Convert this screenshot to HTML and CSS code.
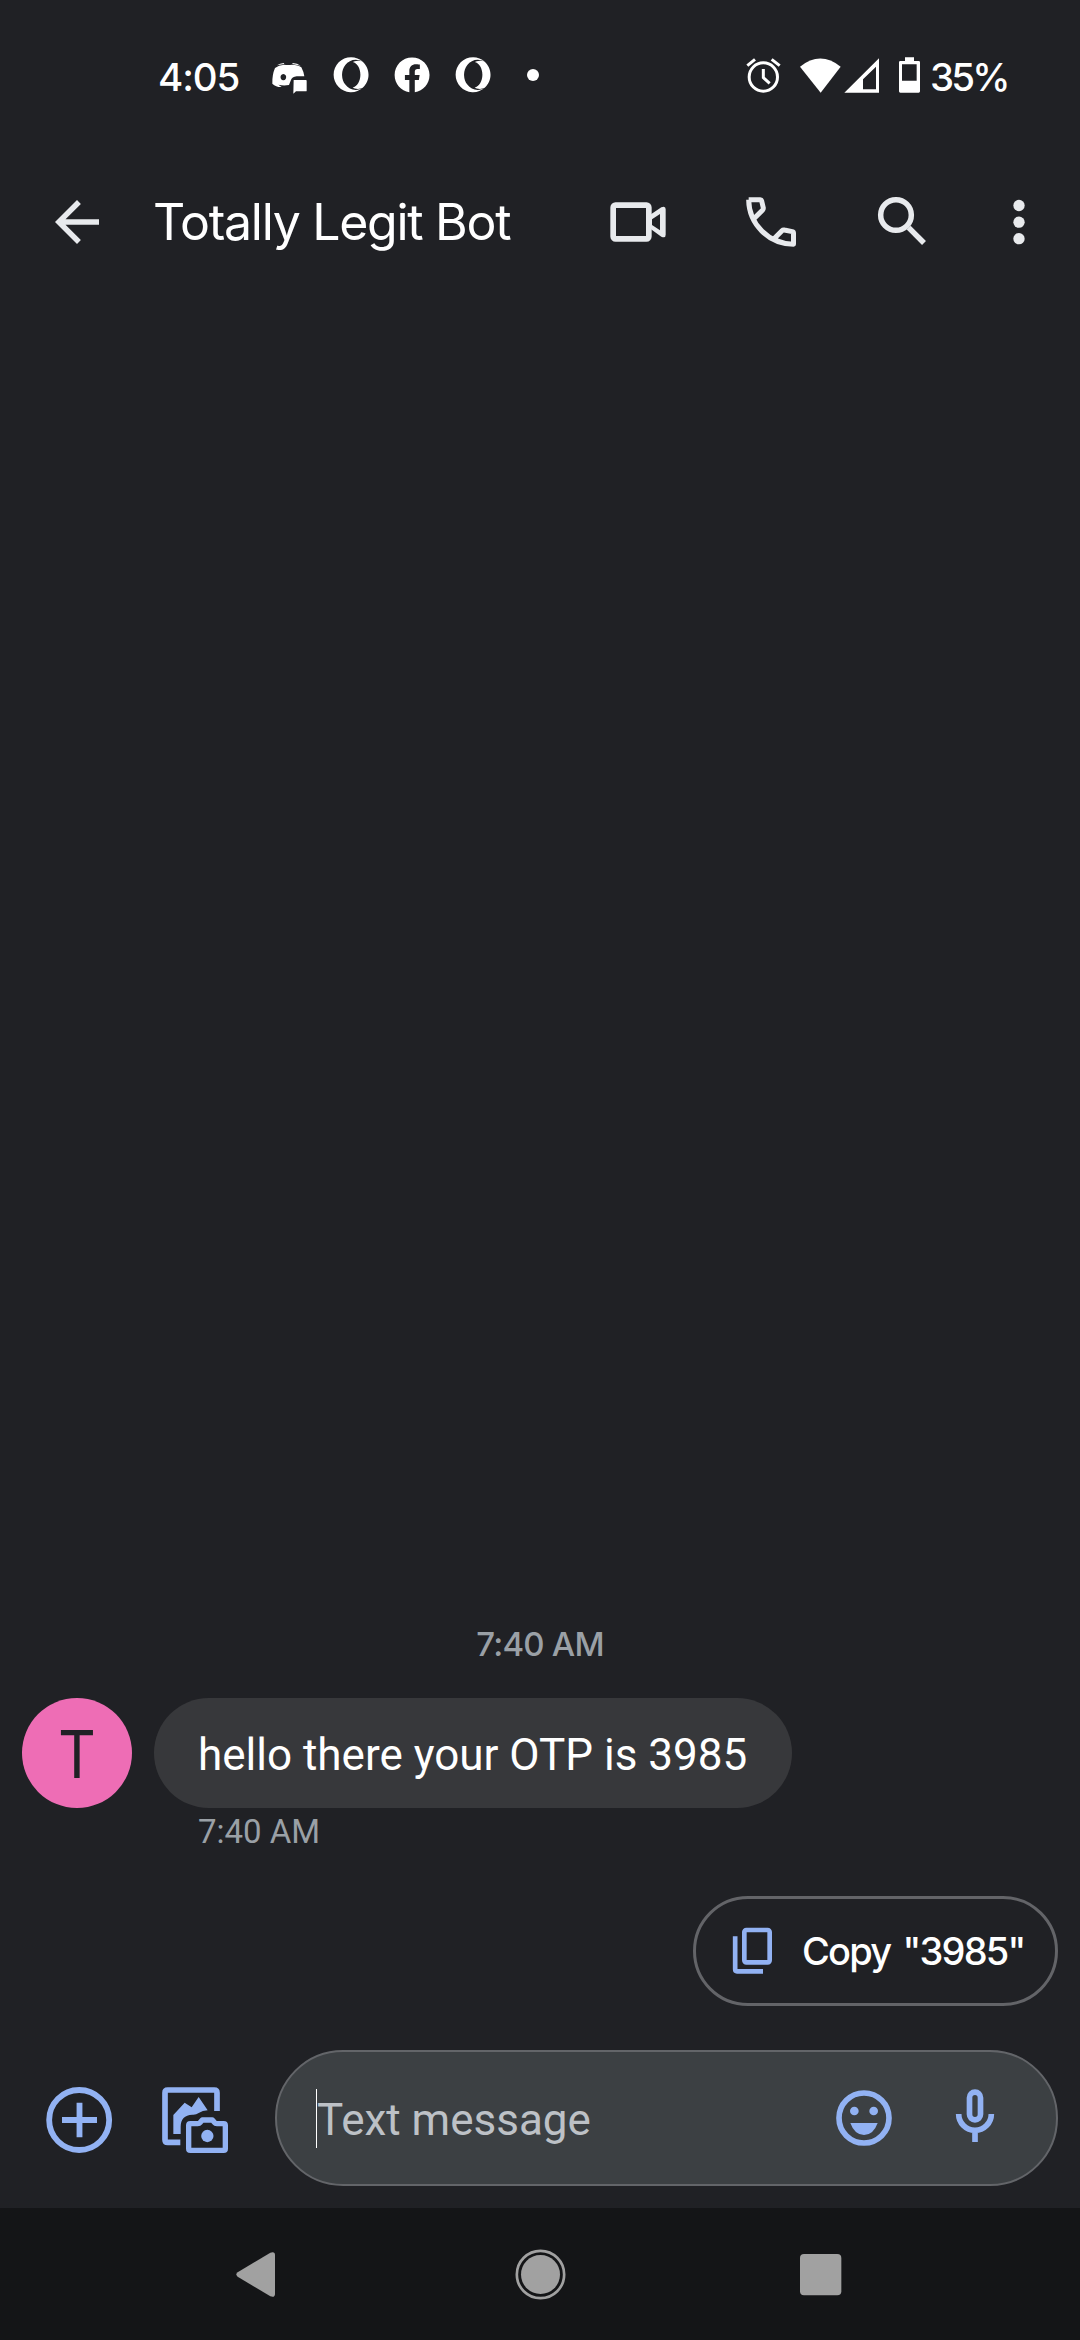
FILE: index.html
```
<!DOCTYPE html>
<html lang="en">
<head>
<meta charset="utf-8">
<title>Totally Legit Bot</title>
<link rel="stylesheet" href="styles.css">
</head>
<body>
<div class="status-bar">
  <span class="clock">4:05</span>
  <div class="notifications">
    <svg width="40" height="40" viewBox="390 45 120 120" fill="currentColor"><path fill-rule="evenodd" d="M405 84Q416 75 432 74Q444 76 456 74Q474 74 484 82Q491 95 493 109H470Q456 110 452 122L447 135Q430 138 415 134L425 141Q409 142 397 131Q396 105 405 84ZM430 102a8.500 9.500 0 1 0 .1 0Z"/><path d="M411 76Q420 70 431 69L433 72ZM458 69Q472 70 482 77L457 72Z"/><path d="M461 120H498Q500 120 500 123V152Q500 154 498 154H468L460 161Z"/></svg>
    <svg width="40" height="40" viewBox="-1.800 -1.600 27.500 27.500" fill="currentColor"><path d="M8.051 5.238c-1.328 1.566-2.186 3.883-2.246 6.480v.564c.061 2.598.918 4.912 2.246 6.479 1.721 2.236 4.279 3.654 7.139 3.654 1.756 0 3.400-.537 4.807-1.471C17.879 22.846 15.074 24 12 24c-.192 0-.383-.004-.570-.014C5.064 23.689 0 18.436 0 12 0 5.371 5.373 0 12 0h.045c3.055.012 5.840 1.166 7.953 3.055-1.408-.930-3.051-1.471-4.810-1.471-2.858 0-5.417 1.420-7.140 3.654h.003zM24 12c0 3.556-1.545 6.748-4.002 8.945-3.078 1.500-5.946.451-6.896-.205 3.023-.664 5.307-4.320 5.307-8.740 0-4.422-2.283-8.075-5.307-8.740.949-.654 3.818-1.703 6.896-.205C22.455 5.250 24 8.445 24 12z"/></svg>
    <svg width="40" height="40" viewBox="-1.800 -1.600 27.500 27.500" fill="currentColor"><path d="M24 12.073c0-6.627-5.373-12-12-12s-12 5.373-12 12c0 5.990 4.388 10.954 10.125 11.854v-8.385H7.078v-3.470h3.047V9.430c0-3.007 1.792-4.669 4.533-4.669 1.312 0 2.686.235 2.686.235v2.953H15.830c-1.491 0-1.956.925-1.956 1.874v2.250h3.328l-.532 3.470h-2.796v8.385C19.612 23.027 24 18.062 24 12.073z"/></svg>
    <svg width="40" height="40" viewBox="-1.800 -1.600 27.500 27.500" fill="currentColor"><path d="M8.051 5.238c-1.328 1.566-2.186 3.883-2.246 6.480v.564c.061 2.598.918 4.912 2.246 6.479 1.721 2.236 4.279 3.654 7.139 3.654 1.756 0 3.400-.537 4.807-1.471C17.879 22.846 15.074 24 12 24c-.192 0-.383-.004-.570-.014C5.064 23.689 0 18.436 0 12 0 5.371 5.373 0 12 0h.045c3.055.012 5.840 1.166 7.953 3.055-1.408-.930-3.051-1.471-4.810-1.471-2.858 0-5.417 1.420-7.140 3.654h.003zM24 12c0 3.556-1.545 6.748-4.002 8.945-3.078 1.500-5.946.451-6.896-.205 3.023-.664 5.307-4.320 5.307-8.740 0-4.422-2.283-8.075-5.307-8.740.949-.654 3.818-1.703 6.896-.205C22.455 5.250 24 8.445 24 12z"/></svg>
    <span class="more-dot"></span>
  </div>
  <div class="system">
    <svg width="40" height="40" viewBox="72 45 120 120" fill="none" stroke="currentColor" stroke-width="9"><circle cx="130" cy="111" r="42.500"/><path d="M130 87V113L149 130M82 77L105 58M155 58L179 77"/></svg>
    <svg class="signal" width="84" height="40" viewBox="234 45 252 120" fill="currentColor"><path d="M240 80Q301 31 362 80L302 158Z"/><path fill-rule="evenodd" d="M373 158L477 55V158ZM429 118V148H468V80Z"/></svg>
    <svg class="battery" width="28" height="40" viewBox="528 45 84 120" fill="currentColor"><path fill-rule="evenodd" d="M555 52H582V63H596Q600 63 600 67V154Q600 158 596 158H541Q537 158 537 154V67Q537 63 541 63H555ZM546 73V122H590V73Z"/></svg>
    <span class="percent">35%</span>
  </div>
</div>

<header class="app-bar">
  <svg class="back" width="66" height="66" viewBox="0 0 24 24" fill="currentColor"><path d="M20 11H7.830l5.590-5.590L12 4l-8 8 8 8 1.410-1.410L7.830 13H20v-2z"/></svg>
  <h1 class="title">Totally Legit Bot</h1>
  <div class="actions">
    <svg width="62" height="54" viewBox="57 45 186 162" fill="none" stroke="currentColor" stroke-width="17" stroke-linejoin="round"><rect x="72.500" y="75.500" width="107" height="101" rx="7"/><path stroke="none" fill="currentColor" fill-rule="evenodd" d="M186 103L217 82Q230 76 230 88V164Q230 176 217 170L186 148ZM189 118V135L213 151V102Z"/></svg>
    <svg width="54" height="54" viewBox="462 45 162 162" fill="none" stroke="currentColor" stroke-width="15" stroke-linejoin="round"><path d="M476 59.500H511Q514 59.500 515 63L520 84Q520 88 518 90L493 115M476 59.500C477 133 536 192 610.500 192.500V159Q610.500 156 607 155L583 150Q579 149 576 152L552 176"/></svg>
    <svg width="54" height="54" viewBox="858 45 162 162" fill="none" stroke="currentColor" stroke-width="16.500"><circle cx="918" cy="105" r="46"/><path d="M956 143L1002 189"/></svg>
    <svg width="20" height="54" viewBox="1257 45 60 162" fill="currentColor"><circle cx="1287" cy="76.500" r="17"/><circle cx="1287" cy="126.500" r="17"/><circle cx="1287" cy="176" r="17"/></svg>
  </div>
</header>

<main class="conversation">
  <div class="day-time">7:40 AM</div>
  <div class="message">
    <div class="avatar"><span>T</span></div>
    <div class="bubble"><span>hello there your OTP is 3985</span></div>
  </div>
  <div class="sent-time">7:40 AM</div>
  <div class="suggestions">
    <div class="chip">
      <svg width="46" height="54" viewBox="150 132 138 162" fill="none" stroke="currentColor" stroke-width="14"><rect x="193" y="150" width="76" height="97" rx="6"/><path d="M165.500 169V268Q165.500 274 171 274H249"/></svg>
      <span>Copy "3985"</span>
    </div>
  </div>
</main>

<div class="composer">
  <svg width="70" height="70" viewBox="72 135 210 210" fill="none" stroke="currentColor" stroke-width="17.500"><circle cx="177.500" cy="240" r="90"/><path d="M126 240H231M178.500 188V292"/></svg>
  <svg class="gallery" width="72" height="72" viewBox="417 132 216 216" fill="none" stroke="currentColor" stroke-width="17"><path d="M591 213V158Q591 150 583 150H443Q435 150 435 158V299Q435 307 443 307H481"/><path stroke="none" fill="currentColor" d="M460 282V225L494 188L515 202L536 171L563 211Q548 211 536 219Q528 225 517 224Q482 226 482 260V282Z"/><path stroke-width="16" stroke-linejoin="round" d="M511 251H533Q538 251 541 247L547 240H577L583 247Q586 251 591 251H611Q616 251 616 256V326Q616 331 611 331H511Q506 331 506 326V256Q506 251 511 251Z"/><circle cx="562" cy="288" r="18.500" fill="currentColor" stroke="none"/></svg>
  <div class="field">
    <span class="caret"></span>
    <span class="placeholder">Text message</span>
    <svg class="emoji" width="64" height="64" viewBox="126 138 192 192" fill="currentColor"><circle cx="222" cy="234" r="75" fill="none" stroke="currentColor" stroke-width="17"/><circle cx="193" cy="213" r="13"/><circle cx="251" cy="213" r="13"/><path d="M181 249H263Q250 285 222 285Q194 285 181 249Z"/></svg>
    <svg class="mic" width="50" height="64" viewBox="480 138 150 192" fill="none" stroke="currentColor" stroke-width="17"><rect x="538.500" y="156.500" width="33" height="83" rx="16.500"/><path d="M506 222A49 49 0 0 0 604 222M555 272V306"/></svg>
  </div>
</div>

<nav class="system-nav">
  <svg width="44" height="54" viewBox="102 141 132 162" fill="currentColor"><path d="M113 217L211 158Q225 153 225 165V281Q225 294 211 289L113 230Q105 223 113 217Z"/></svg>
  <svg width="54" height="54" viewBox="939 141 162 162" fill="currentColor"><circle cx="1021.500" cy="223.500" r="58.500"/><circle cx="1021.500" cy="223.500" r="71" fill="none" stroke="currentColor" stroke-width="8"/></svg>
  <svg width="46" height="54" viewBox="894 141 138 162" fill="currentColor"><rect x="900" y="162" width="124" height="124" rx="12"/></svg>
</nav>
</body>
</html>
```

FILE: styles.css
```
* { box-sizing: border-box; }

body {
  margin: 0;
  width: 1080px;
  height: 2340px;
  display: flex;
  flex-direction: column;
  overflow: hidden;
  background: #202125;
  color: #fff;
  font-family: Roboto, sans-serif;
}

svg { display: block; flex: none; }
span { white-space: nowrap; }

.status-bar {
  height: 150px;
  flex: none;
  display: flex;
  align-items: center;
  padding-left: 158px;
  font: 500 38.5px/46px Inter, sans-serif;
}
.clock { width: 112px; padding-top: 4px; letter-spacing: -1.1px; }
.notifications { display: flex; align-items: center; gap: 21px; }
.more-dot {
  width: 12px;
  height: 12px;
  margin-left: 13px;
  border-radius: 50%;
  background: #fff;
}
.system { display: flex; align-items: center; margin-left: 205px; }
.signal { margin-left: 14px; }
.battery { margin-left: 14px; }
.percent { margin-left: 6px; padding-top: 4px; letter-spacing: -2.9px; }

.app-bar {
  height: 144px;
  flex: none;
  display: flex;
  align-items: center;
  padding-left: 44px;
  color: #e8eaed;
}
.title {
  width: 455px;
  margin: 0 0 0 43px;
  color: #fff;
  font: 400 50px/60px Inter, sans-serif;
  letter-spacing: -1.3px;
  white-space: nowrap;
}
.actions { display: flex; align-items: center; }
.actions svg:nth-child(2) { margin-left: 74px; }
.actions svg:nth-child(3) { margin-left: 78px; }
.actions svg:nth-child(4) { margin-left: 79px; }

.conversation {
  flex: 1;
  display: flex;
  flex-direction: column;
  justify-content: flex-end;
}
.day-time {
  height: 40px;
  margin-bottom: 34px;
  text-align: center;
  color: #9aa0a6;
  font: 500 33px/40px Inter, sans-serif;
  letter-spacing: -.8px;
}
.message { display: flex; padding-left: 22px; gap: 22px; }
.avatar {
  width: 110px;
  height: 110px;
  display: flex;
  align-items: center;
  justify-content: center;
  padding-top: 3px;
  border-radius: 50%;
  background: #ee6db5;
  color: #202125;
  font-size: 67px;
  line-height: 80px;
}
.avatar span { transform: scaleX(.87); }
.bubble {
  width: 638px;
  height: 110px;
  padding: 2px 0 0 44px;
  border-radius: 55px;
  background: #37383b;
  font-size: 44px;
  line-height: 110px;
}
.sent-time {
  height: 40px;
  margin: 4px 0 0 198px;
  color: #9aa0a6;
  font-size: 33px;
  line-height: 40px;
}
.suggestions {
  display: flex;
  justify-content: flex-end;
  padding: 44px 22px 44px 0;
}
.chip {
  width: 365px;
  height: 110px;
  display: flex;
  align-items: center;
  padding-left: 34px;
  border: 3px solid #636468;
  border-radius: 55px;
  font: 500 38px/46px Inter, sans-serif;
  letter-spacing: -1.8px;
  word-spacing: 4px;
}
.chip svg { color: #92b2f3; }
.chip span { margin-left: 26px; }

.composer {
  flex: none;
  height: 158px;
  display: flex;
  align-items: flex-start;
  padding-left: 44px;
  color: #92b2f3;
}
.composer > svg { margin-top: 35px; }
.composer > .gallery { margin: 34px 44px 0 45px; }
.field {
  width: 783px;
  height: 136px;
  display: flex;
  align-items: center;
  padding-left: 39px;
  border: 2px solid #636569;
  border-radius: 68px;
  background: #3c4043;
}
.caret { width: 1px; height: 59px; background: #fff; }
.placeholder {
  width: 515px;
  padding-top: 4px;
  color: #bdc1c6;
  font-size: 44px;
  line-height: 52px;
}
.mic { margin-left: 54px; }

.system-nav {
  flex: none;
  height: 132px;
  display: flex;
  align-items: center;
  gap: 233px;
  padding-left: 234px;
  background: #141517;
  color: #a1a1a1;
}
.system-nav svg:nth-child(2) { margin-left: 2px; }
.system-nav svg:nth-child(3) { margin-left: -2px; }
```
